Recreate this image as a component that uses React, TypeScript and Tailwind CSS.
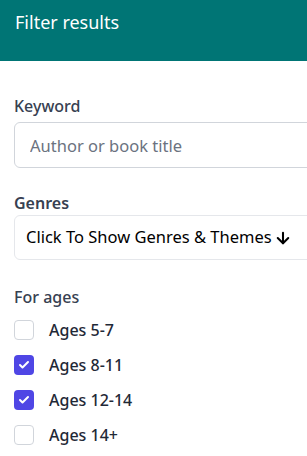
import React from 'react';
import { ArrowDown, Check } from 'lucide-react';

const ages = [
  { label: 'Ages 5-7', checked: false },
  { label: 'Ages 8-11', checked: true },
  { label: 'Ages 12-14', checked: true },
  { label: 'Ages 14+', checked: false },
];

const App: React.FC = () => {
  return (
    <div
      className="w-full min-h-[456px] overflow-hidden bg-white"
      style={{ fontFamily: '"Noto Sans", "Open Sans", sans-serif' }}
    >
      <div className="h-[61px] bg-[#007575] px-[15px] pt-[8px]">
        <h2 className="text-[18px] leading-7 text-white">Filter results</h2>
      </div>

      <div className="pl-[14px] pt-[33px]">
        <label className="block text-[16px] leading-6 font-medium text-[#374151] mb-1">Keyword</label>
        <input
          type="text"
          placeholder="Author or book title"
          className="w-[320px] h-[46px] rounded-md border border-[#d1d5db] pl-[15px] text-[16.5px] placeholder:text-[#6b7280] outline-none"
        />

        <label className="block mt-[23px] text-[16px] leading-6 font-semibold text-[#374151]">Genres</label>
        <button className="w-[320px] h-[45px] rounded-md border border-[#e5e7eb] pl-[11px] flex items-center text-[16.5px] text-black">
          Click To Show Genres &amp; Themes
          <ArrowDown className="ml-[2px] h-[18px] w-[18px]" strokeWidth={2.75} />
        </button>

        <p className="mt-[25px] mb-[3px] text-[16px] leading-6 font-medium text-[#374151]">For ages</p>
        <ul>
          {ages.map((age) => (
            <li key={age.label} className="h-[35px] flex items-center">
              {age.checked ? (
                <span className="w-5 h-5 rounded-[4px] bg-[#4f46e5] flex items-center justify-center">
                  <Check className="h-3 w-3 text-white" strokeWidth={4} />
                </span>
              ) : (
                <span className="w-5 h-5 rounded-[4px] border border-[#d1d5db] bg-white" />
              )}
              <span className="ml-[15px] text-[16px] font-medium text-[#1f2937]">{age.label}</span>
            </li>
          ))}
        </ul>
      </div>
    </div>
  );
};

export default App;
